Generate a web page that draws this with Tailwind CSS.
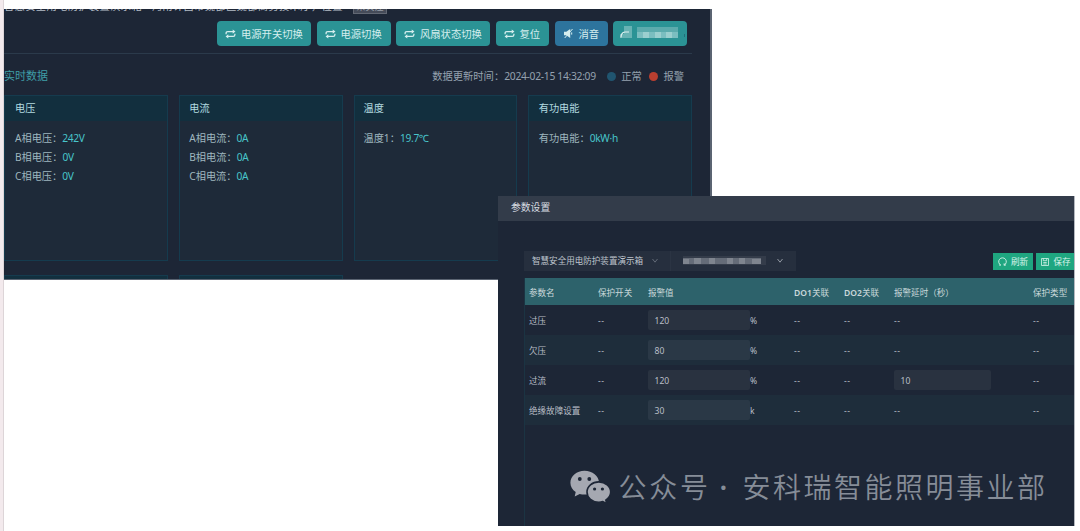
<!DOCTYPE html>
<html lang="zh-CN">
<head>
    <meta charset="UTF-8">
    <meta name="viewport" content="width=device-width, initial-scale=1.0">
    <title>参数设置</title>
    <script src="https://cdn.jsdelivr.net/npm/@tailwindcss/browser@4"></script>
</head>
<body class="relative w-[1080px] h-[531px] overflow-hidden bg-white font-['Noto_Sans','Noto_Sans_CJK_SC',sans-serif]">
    <svg class="hidden">
        <symbol id="swap" viewBox="0 0 12 10">
            <path d="M1.2 5.2V4.2Q1.2 2.3 3 2.3H9.5M10.8 4.8v1Q10.8 7.7 9 7.7H2.5" fill="none" stroke="currentColor" stroke-width="1.4"/>
            <path d="M8.4 0L11.4 2.3L8.4 4.6ZM3.6 5.4L.6 7.7L3.6 10Z" fill="currentColor"/>
        </symbol>
        <symbol id="chevron" viewBox="0 0 8 6">
            <path d="M1.5 1l2.5 3.2L6.5 1" fill="none" stroke="currentColor" stroke-width="1"/>
        </symbol>
    </svg>

    <div class="w-1 h-full bg-[#f3eaed] border-r border-[#ddd5d8]"></div>

    <!-- realtime data window -->
    <div class="absolute left-1 top-[9px] w-[708px] h-[271px] overflow-hidden bg-[#1d2636] border-r-2 border-b border-r-[#5b6472] border-b-[#5b6472]">
        <div class="flex h-[5px] overflow-hidden text-[10.3px] text-[#b4bdc7]">
            <div class="w-[349px] -mt-[9px] leading-[12px] tracking-[0.32px] whitespace-nowrap">智慧安全用电防护装置演示箱 - 河南许昌市魏都区魏都商务技术厅，位置</div>
            <div class="w-[34px] -mt-[8px] h-[13px] text-center text-[9px] leading-[10px] bg-[#454b59] border border-[#626874] text-[#9aa0aa]">未关注</div>
        </div>
        <div class="flex h-[40px] w-[688px] pl-[213px] pt-[7px] gap-[5.5px] border-b border-[#2b3a4b] text-[10.3px] leading-[25px] text-[#d5eeee] whitespace-nowrap">
            <div class="flex items-center w-[94px] h-[25px] rounded bg-[#2b9395] pl-[8px] gap-[5px]"><svg class="w-[11px] h-[10px]"><use href="#swap"/></svg><div class="pt-px">电源开关切换</div></div>
            <div class="flex items-center w-[74px] h-[25px] rounded bg-[#2b9395] pl-[8px] gap-[5px]"><svg class="w-[11px] h-[10px]"><use href="#swap"/></svg><div class="pt-px">电源切换</div></div>
            <div class="flex items-center w-[94px] h-[25px] rounded bg-[#2b9395] pl-[8px] gap-[5px]"><svg class="w-[11px] h-[10px]"><use href="#swap"/></svg><div class="pt-px">风扇状态切换</div></div>
            <div class="flex items-center w-[53.5px] h-[25px] rounded bg-[#2b9395] pl-[8px] gap-[5px]"><svg class="w-[11px] h-[10px]"><use href="#swap"/></svg><div class="pt-px">复位</div></div>
            <div class="flex items-center w-[53.5px] h-[25px] rounded bg-[#2d749d] pl-[8px] gap-[5px]">
                <svg class="w-[11px] h-[11px]" viewBox="0 0 11 11"><path d="M1 3.8h2.3L7.2 1v9L3.3 7.2H1Z" fill="currentColor"/><path d="M9.5 1L1.7 10" stroke="currentColor" stroke-width="1"/><path d="M8.7 4.4v2.2" stroke="currentColor"/></svg><div class="pt-px">消音</div>
            </div>
            <div class="flex items-center w-[74px] h-[25px] rounded bg-[#2b9395] -ml-[0.5px]">
                <svg class="w-[74px] h-[25px]" viewBox="0 0 74 25">
                    <path d="M11 5h8v12H7v-4h4Z" fill="#68b3b4"/>
                    <path d="M8 16.5Q8 11.5 12 11h4" fill="none" stroke="#e0f1f1" stroke-width="1.2"/>
                    <path d="M24 6h41v5H24Z" fill="#5cabad"/>
                    <path d="M24 11h41v6H24Z" fill="#7bbec0"/>
                    <path d="M30 11h6v6h-6ZM42 11h6v6h-6ZM53 11h6v6h-6Z" fill="#9bcfcf"/>
                    <path d="M71.5 13v3" stroke="#22707b"/>
                </svg>
            </div>
        </div>
        <div class="flex h-[41px] w-[688px] items-center pt-[4px] text-[10.3px] text-[#95a2af]">
            <div class="text-[11px] text-[#3f9da6]">实时数据</div>
            <div class="ml-auto pt-px">数据更新时间：</div>
            <div class="tracking-[-0.3px] mr-[11px] pt-px">2024-02-15 14:32:09</div>
            <div class="size-[9px] rounded-full bg-[#205570] mr-[5.5px]"></div><div class="pt-px">正常</div>
            <div class="size-[9px] rounded-full bg-[#b93f30] ml-[7px] mr-[5.5px]"></div>
            <div class="mr-[8px] pt-px">报警</div>
        </div>
        <div class="grid grid-cols-4 w-[688px] gap-x-[11px] gap-y-[14px] text-[10.2px] text-[#9fb7bf]">
            <div class="h-[166px] bg-[#1e2a39] border border-[#153b4e]">
                <div class="h-[25px] pl-[10px] leading-[25px] bg-[#122f3e] text-[#b3dbe0]">电压</div>
                <div class="pl-[10px] pt-[7.5px] leading-[19px]">
                    <div>A相电压：<span class="text-[#48c5cb] tracking-[-0.3px]">242V</span></div>
                    <div>B相电压：<span class="text-[#48c5cb] tracking-[-0.3px]">0V</span></div>
                    <div>C相电压：<span class="text-[#48c5cb] tracking-[-0.3px]">0V</span></div>
                </div>
            </div>
            <div class="h-[166px] bg-[#1e2a39] border border-[#153b4e]">
                <div class="h-[25px] pl-[9.5px] leading-[25px] bg-[#122f3e] text-[#b3dbe0]">电流</div>
                <div class="pl-[9.5px] pt-[7.5px] leading-[19px]">
                    <div>A相电流：<span class="text-[#48c5cb] tracking-[-0.3px]">0A</span></div>
                    <div>B相电流：<span class="text-[#48c5cb] tracking-[-0.3px]">0A</span></div>
                    <div>C相电流：<span class="text-[#48c5cb] tracking-[-0.3px]">0A</span></div>
                </div>
            </div>
            <div class="h-[166px] bg-[#1e2a39] border border-[#153b4e]">
                <div class="h-[25px] pl-[9px] leading-[25px] bg-[#122f3e] text-[#b3dbe0]">温度</div>
                <div class="pl-[9px] pt-[7.5px] leading-[19px]">
                    <div>温度1：<span class="text-[#48c5cb] tracking-[-0.3px]">19.7℃</span></div>
                </div>
            </div>
            <div class="h-[166px] bg-[#1e2a39] border border-[#153b4e]">
                <div class="h-[25px] pl-[9.5px] leading-[25px] bg-[#122f3e] text-[#b3dbe0]">有功电能</div>
                <div class="pl-[9.5px] pt-[7.5px] leading-[19px]">
                    <div>有功电能：<span class="text-[#48c5cb] tracking-[-0.3px]">0kW·h</span></div>
                </div>
            </div>
            <div class="h-[25px] bg-[#122f3e] border border-[#153b4e]"></div>
            <div class="h-[25px] bg-[#122f3e] border border-[#153b4e]"></div>
        </div>
    </div>

    <!-- parameter settings dialog -->
    <div class="absolute left-[498px] top-[196px] w-[577px] h-[330px] overflow-hidden bg-[#1d2636] border-r border-[#b4b8bf]">
        <div class="h-[25px] pl-[13px] leading-[24px] bg-[#333c4a] text-[9.8px] text-[#d8dce2]">参数设置</div>
        <div class="flex h-[57px] pl-[26px] pt-[30px] text-[8.55px]">
            <div class="flex items-center w-[146px] h-5 bg-[#262f3e] pl-2 text-[#bdc3cb] whitespace-nowrap">智慧安全用电防护装置演示箱
                <svg class="w-2 h-1.5 ml-[8px] text-[#626a77]"><use href="#chevron"/></svg>
            </div>
            <div class="flex items-center w-[126px] h-5 bg-[#262f3e] border-l border-[#2b3443] pl-[12px]">
                <svg class="w-[83px] h-[11px]" viewBox="0 0 83 11">
                    <path d="M0 0h83v9H0Z" fill="#343c4a"/>
                    <path d="M0 2h78v6H0Z" fill="#656c78"/>
                    <path d="M0 3h6v5H0ZM11 2h7v6h-7ZM26 2h6v6h-6ZM44 2h6v6h-6ZM56 2h6v6h-6ZM69 3h9v5h-9Z" fill="#7f858f"/>
                </svg>
                <svg class="w-2 h-1.5 ml-[10px] text-[#9198a2]"><use href="#chevron"/></svg>
            </div>
            <div class="flex gap-[3px] ml-auto mt-[2px] h-[17px] text-[#d8f4eb]">
                <div class="flex items-center w-[40px] h-[17px] bg-[#1fa680] pl-[4.5px] gap-[4.5px] whitespace-nowrap">
                    <svg class="w-[9px] h-[9px]" viewBox="0 0 9 9"><path d="M2.7 8A3.8 3.8 0 1 1 6.3 8M6.1 8.4V6.4M1 8h2M6 8h2" fill="none" stroke="currentColor" stroke-width=".9"/></svg><div class="pt-px">刷新</div>
                </div>
                <div class="flex items-center w-[38px] h-[17px] bg-[#1fa680] pl-[4.5px] gap-[5px] whitespace-nowrap">
                    <svg class="w-[8px] h-[8px]" viewBox="0 0 8 8"><path d="M.5 .5h7v7h-7ZM2.3 .5v2.2h3.4V.5M2.3 4.5h3.4M2.3 6h3.4" fill="none" stroke="currentColor" stroke-width=".8"/></svg><div class="pt-px">保存</div>
                </div>
            </div>
        </div>
        <div class="ml-[26px] h-[252px] border-l border-[#1b3443]">
            <table class="table-fixed w-[549px] text-left text-[8.55px] text-[#b9bfc7] leading-[12px] whitespace-nowrap">
                <colgroup>
                    <col class="w-[69px]"><col class="w-[49px]"><col class="w-[147px]"><col class="w-[50px]"><col class="w-[50px]"><col class="w-[139px]"><col class="w-[45px]">
                </colgroup>
                <thead>
                    <tr class="h-[27px] bg-[#2d626b] text-[#c9d8da]">
                        <th class="pt-0.5 pl-1 font-normal">参数名</th>
                        <th class="pt-0.5 pl-1 font-normal">保护开关</th>
                        <th class="pt-0.5 pl-[5px] font-normal">报警值</th>
                        <th class="pt-0.5 pl-1 font-normal"><span class="font-semibold">DO1</span>关联</th>
                        <th class="pt-0.5 pl-1 font-normal"><span class="font-semibold">DO2</span>关联</th>
                        <th class="pt-0.5 pl-1 font-normal">报警延时（秒）</th>
                        <th class="pt-0.5 pl-1 font-normal">保护类型</th>
                    </tr>
                </thead>
                <tbody>
                    <tr class="h-[30px]">
                        <td class="pt-px pl-1">过压</td>
                        <td class="pt-px pl-1 tracking-[0.6px]">--</td>
                        <td class="pl-[5px]"><div class="flex items-center"><div class="w-[102px] h-5 pl-[6.5px] leading-[22px] rounded-xs bg-[#293240]">120</div><div class="pt-px">%</div></div></td>
                        <td class="pt-px pl-1 tracking-[0.6px]">--</td>
                        <td class="pt-px pl-1 tracking-[0.6px]">--</td>
                        <td class="pt-px pl-1 tracking-[0.6px]">--</td>
                        <td class="pt-px pl-1 tracking-[0.6px]">--</td>
                    </tr>
                    <tr class="h-[30px] bg-[#1e2d3b]">
                        <td class="pt-px pl-1">欠压</td>
                        <td class="pt-px pl-1 tracking-[0.6px]">--</td>
                        <td class="pl-[5px]"><div class="flex items-center"><div class="w-[102px] h-5 pl-[6.5px] leading-[22px] rounded-xs bg-[#2a3846]">80</div><div class="pt-px">%</div></div></td>
                        <td class="pt-px pl-1 tracking-[0.6px]">--</td>
                        <td class="pt-px pl-1 tracking-[0.6px]">--</td>
                        <td class="pt-px pl-1 tracking-[0.6px]">--</td>
                        <td class="pt-px pl-1 tracking-[0.6px]">--</td>
                    </tr>
                    <tr class="h-[30px]">
                        <td class="pt-px pl-1">过流</td>
                        <td class="pt-px pl-1 tracking-[0.6px]">--</td>
                        <td class="pl-[5px]"><div class="flex items-center"><div class="w-[102px] h-5 pl-[6.5px] leading-[22px] rounded-xs bg-[#293240]">120</div><div class="pt-px">%</div></div></td>
                        <td class="pt-px pl-1 tracking-[0.6px]">--</td>
                        <td class="pt-px pl-1 tracking-[0.6px]">--</td>
                        <td class="pl-1"><div class="w-[97px] h-5 pl-[6.5px] leading-[22px] rounded-xs bg-[#293240]">10</div></td>
                        <td class="pt-px pl-1 tracking-[0.6px]">--</td>
                    </tr>
                    <tr class="h-[30px] bg-[#1e2d3b]">
                        <td class="pt-px pl-1">绝缘故障设置</td>
                        <td class="pt-px pl-1 tracking-[0.6px]">--</td>
                        <td class="pl-[5px]"><div class="flex items-center"><div class="w-[102px] h-5 pl-[6.5px] leading-[22px] rounded-xs bg-[#2a3846]">30</div><div class="pt-px">k</div></div></td>
                        <td class="pt-px pl-1 tracking-[0.6px]">--</td>
                        <td class="pt-px pl-1 tracking-[0.6px]">--</td>
                        <td class="pt-px pl-1 tracking-[0.6px]">--</td>
                        <td class="pt-px pl-1 tracking-[0.6px]">--</td>
                    </tr>
                </tbody>
            </table>
        </div>
    </div>

    <!-- watermark -->
    <div class="absolute left-[570px] top-[467px] flex items-center h-10 text-[28px] leading-10 font-[350] text-[#868d98] whitespace-nowrap">
        <svg class="w-[41px] h-[34px]" viewBox="0 0 41 34">
            <path d="M14.5 .8C6.8 .8 .4 6 .4 12.7c0 3.7 2 7 5.3 9.300l-1 4.600 5-2.700c1.500.5 3.200.7 5 .7C22.500 24.600 29 19.400 29 12.700S22.300.8 14.500.8Z" fill="#a5a8b1"/>
            <circle cx="9.8" cy="9" r="1.9" fill="#1d2636"/><circle cx="19.3" cy="9" r="1.9" fill="#1d2636"/>
            <path d="M28.8 11.9C22.2 11.9 17 16.3 17 22s5.200 10.200 11.800 10.200c1.300 0 2.700-.2 4-.6l4 2-1-3.500c2.900-1.900 4.900-4.800 4.900-8.100 0-5.700-5.300-10.100-11.900-10.100Z" fill="#a5a8b1" stroke="#1d2636" stroke-width="1.6"/>
            <circle cx="24.6" cy="19" r="1.6" fill="#1d2636"/><circle cx="32.4" cy="19" r="1.6" fill="#1d2636"/>
        </svg>
        <div class="w-[101px] ml-[7.5px] tracking-[2.8px]">公众号</div>
        <div class="w-[23px] font-semibold">·</div>
        <div class="tracking-[2.5px]">安科瑞智能照明事业部</div>
    </div>
</body>
</html>
